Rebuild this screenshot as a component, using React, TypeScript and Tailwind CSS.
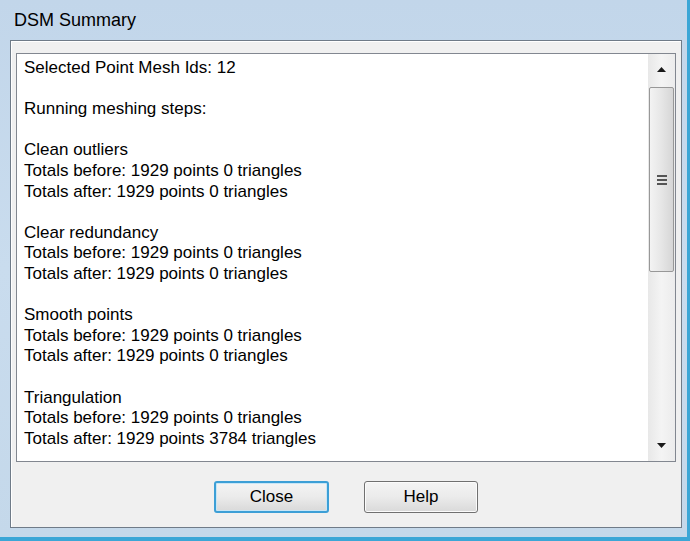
import React from "react";

const lines = [
  "Selected Point Mesh Ids: 12",
  "",
  "Running meshing steps:",
  "",
  "Clean outliers",
  "Totals before: 1929 points 0 triangles",
  "Totals after: 1929 points 0 triangles",
  "",
  "Clear redundancy",
  "Totals before: 1929 points 0 triangles",
  "Totals after: 1929 points 0 triangles",
  "",
  "Smooth points",
  "Totals before: 1929 points 0 triangles",
  "Totals after: 1929 points 0 triangles",
  "",
  "Triangulation",
  "Totals before: 1929 points 0 triangles",
  "Totals after: 1929 points 3784 triangles",
];

const font = { fontFamily: '"Liberation Sans", Arial, sans-serif' };

const ScrollBar = () => (
  <div className="flex w-[27px] flex-col bg-gradient-to-r from-[#e8e8e8] via-[#f4f4f4] to-[#ececec]">
    {/* Up arrow */}
    <div className="flex h-[31px] items-center justify-center">
      <svg width="9" height="5" viewBox="0 0 9 5">
        <path d="M0 5 L4.5 0 L9 5 Z" fill="#1a1a1a" />
      </svg>
    </div>
    {/* Thumb */}
    <div className="mx-[1px] mt-[2px] flex h-[185px] items-center justify-center rounded-[2px] border border-[#989898] bg-gradient-to-r from-[#f3f3f3] via-[#e6e6e6] to-[#d6d6d6]">
      <div className="flex flex-col gap-[2px]">
        <div className="h-[2px] w-[10px] bg-[#555]" />
        <div className="h-[2px] w-[10px] bg-[#555]" />
        <div className="h-[2px] w-[10px] bg-[#555]" />
      </div>
    </div>
    <div className="flex-1" />
    {/* Down arrow */}
    <div className="flex h-[31px] items-center justify-center">
      <svg width="9" height="5" viewBox="0 0 9 5">
        <path d="M0 0 L9 0 L4.5 5 Z" fill="#1a1a1a" />
      </svg>
    </div>
  </div>
);

export default function App() {
  return (
    <div
      className="flex h-[541px] w-[690px] flex-col overflow-hidden border-r-[3px] border-b-[4px] border-r-[#3ba6d6] border-b-[#3ba6d6] bg-gradient-to-b from-[#c2d6ea] via-[#c9dcee] to-[#c4d8ea]"
      style={font}
    >
      {/* Title bar */}
      <div className="flex h-[40px] items-center pl-[14px] text-[18px] text-black">DSM Summary</div>

      {/* Client area */}
      <div className="mb-[9px] ml-[10px] mr-[5px] flex flex-1 flex-col border border-[#6f7b88] bg-[#f0f0f0] shadow-[inset_1px_1px_0_#ffffff]">
        {/* List box */}
        <div className="mx-[5px] mt-[12px] flex h-[409px] border border-[#828790] bg-white">
          <div className="flex-1 px-[7px] pt-[4px] text-[17px] leading-[20.6px] text-black">
            {lines.map((l, i) => (
              <div key={i} className="h-[20.6px] whitespace-nowrap">
                {l}
              </div>
            ))}
          </div>
          <ScrollBar />
        </div>

        {/* Buttons */}
        <div className="flex flex-1 items-center justify-center gap-[35px] pt-[5px]">
          <button className="h-[32px] w-[115px] rounded-[3px] border-2 border-[#3c9fd6] bg-gradient-to-b from-[#f4f4f4] via-[#ebebeb] to-[#d9d9d9] text-[17px] text-black shadow-[inset_0_0_0_1px_#c8e6f6]">
            Close
          </button>
          <button className="h-[32px] w-[114px] rounded-[3px] border border-[#707070] bg-gradient-to-b from-[#f4f4f4] via-[#ebebeb] to-[#d9d9d9] text-[17px] text-black shadow-[inset_0_0_0_1px_#fbfbfb]">
            Help
          </button>
        </div>
      </div>
    </div>
  );
}
